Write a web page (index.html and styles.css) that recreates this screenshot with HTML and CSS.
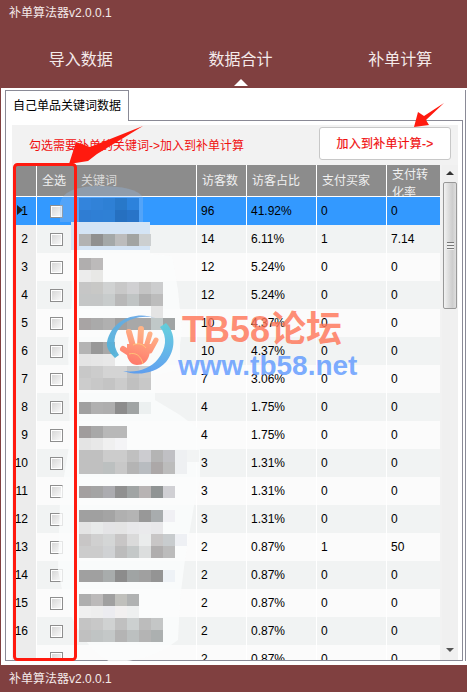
FILE: index.html
```html
<!DOCTYPE html>
<html lang="zh">
<head>
<meta charset="utf-8">
<title>补单算法器v2.0.0.1</title>
<link rel="stylesheet" href="styles.css">
</head>
<body>
<div class="app">
  <header class="top">
    <div class="title">补单算法器v2.0.0.1</div>
    <nav class="nav">
      <div class="nav-item">导入数据</div>
      <div class="nav-item active">数据合计</div>
      <div class="nav-item">补单计算</div>
    </nav>
  </header>
  <main class="main">
    <div class="frame">
      <div class="tab">自己单品关键词数据</div>
      <div class="pane">
        <div class="panel">
          <div class="toolbar">
            <div class="hint">勾选需要补单的关键词-&gt;加入到补单计算</div>
            <div class="add-btn">加入到补单计算-&gt;</div>
          </div>
          <div class="body">
            <div class="grid">
              <div class="row head"><div class="c"></div><div class="c sel">全选</div><div class="c kw">关键词</div><div class="c">访客数</div><div class="c">访客占比</div><div class="c">支付买家</div><div class="c wrap">支付转化率</div></div>
              <div class="row current"><div class="c rn"><i class="ptr"></i>1</div><div class="c sel"><span class="cb"></span></div><div class="c"></div><div class="c">96</div><div class="c">41.92%</div><div class="c">0</div><div class="c">0</div></div>
              <div class="row alt"><div class="c rn">2</div><div class="c sel"><span class="cb"></span></div><div class="c"></div><div class="c">14</div><div class="c">6.11%</div><div class="c">1</div><div class="c">7.14</div></div>
              <div class="row"><div class="c rn">3</div><div class="c sel"><span class="cb"></span></div><div class="c"></div><div class="c">12</div><div class="c">5.24%</div><div class="c">0</div><div class="c">0</div></div>
              <div class="row alt"><div class="c rn">4</div><div class="c sel"><span class="cb"></span></div><div class="c"></div><div class="c">12</div><div class="c">5.24%</div><div class="c">0</div><div class="c">0</div></div>
              <div class="row"><div class="c rn">5</div><div class="c sel"><span class="cb"></span></div><div class="c"></div><div class="c">10</div><div class="c">4.37%</div><div class="c">0</div><div class="c">0</div></div>
              <div class="row alt"><div class="c rn">6</div><div class="c sel"><span class="cb"></span></div><div class="c"></div><div class="c">10</div><div class="c">4.37%</div><div class="c">0</div><div class="c">0</div></div>
              <div class="row"><div class="c rn">7</div><div class="c sel"><span class="cb"></span></div><div class="c"></div><div class="c">7</div><div class="c">3.06%</div><div class="c">0</div><div class="c">0</div></div>
              <div class="row alt"><div class="c rn">8</div><div class="c sel"><span class="cb"></span></div><div class="c"></div><div class="c">4</div><div class="c">1.75%</div><div class="c">0</div><div class="c">0</div></div>
              <div class="row"><div class="c rn">9</div><div class="c sel"><span class="cb"></span></div><div class="c"></div><div class="c">4</div><div class="c">1.75%</div><div class="c">0</div><div class="c">0</div></div>
              <div class="row alt"><div class="c rn">10</div><div class="c sel"><span class="cb"></span></div><div class="c"></div><div class="c">3</div><div class="c">1.31%</div><div class="c">0</div><div class="c">0</div></div>
              <div class="row"><div class="c rn">11</div><div class="c sel"><span class="cb"></span></div><div class="c"></div><div class="c">3</div><div class="c">1.31%</div><div class="c">0</div><div class="c">0</div></div>
              <div class="row alt"><div class="c rn">12</div><div class="c sel"><span class="cb"></span></div><div class="c"></div><div class="c">3</div><div class="c">1.31%</div><div class="c">0</div><div class="c">0</div></div>
              <div class="row"><div class="c rn">13</div><div class="c sel"><span class="cb"></span></div><div class="c"></div><div class="c">2</div><div class="c">0.87%</div><div class="c">1</div><div class="c">50</div></div>
              <div class="row alt"><div class="c rn">14</div><div class="c sel"><span class="cb"></span></div><div class="c"></div><div class="c">2</div><div class="c">0.87%</div><div class="c">0</div><div class="c">0</div></div>
              <div class="row"><div class="c rn">15</div><div class="c sel"><span class="cb"></span></div><div class="c"></div><div class="c">2</div><div class="c">0.87%</div><div class="c">0</div><div class="c">0</div></div>
              <div class="row alt"><div class="c rn">16</div><div class="c sel"><span class="cb"></span></div><div class="c"></div><div class="c">2</div><div class="c">0.87%</div><div class="c">0</div><div class="c">0</div></div>
              <div class="row"><div class="c rn"></div><div class="c sel"><span class="cb"></span></div><div class="c"></div><div class="c">2</div><div class="c">0.87%</div><div class="c">0</div><div class="c">0</div></div>
            </div>
            <div class="scrollbar">
              <i class="arrow up"></i>
              <div class="thumb"><i class="grip"></i></div>
              <i class="arrow down"></i>
            </div>
          </div>
        </div>
      </div>
    </div>
  </main>
  <footer class="foot">补单算法器v2.0.0.1</footer>
</div>

<svg class="overlay" width="467" height="692" viewBox="0 0 467 692" aria-hidden="true">
  <defs>
    <linearGradient id="ringR" x1="0" y1="0" x2="0" y2="1"><stop offset="0" stop-color="#5fd0dc"/><stop offset="1" stop-color="#5a9cf0"/></linearGradient>
    <linearGradient id="ringL" x1="0" y1="1" x2="1" y2="0"><stop offset="0" stop-color="#4fb4d8"/><stop offset="1" stop-color="#70a8ea"/></linearGradient>
    <linearGradient id="hand" gradientUnits="userSpaceOnUse" x1="140" y1="328" x2="128" y2="366"><stop offset="0" stop-color="#ffb488"/><stop offset="1" stop-color="#ff7468"/></linearGradient>
  </defs>

  <path class="smear-top" d="M60 203Q64 186 100 186Q135 186 143 197V222H60Z"/>
  <path class="smear-band" d="M71 222H150V250H71Z"/>

  <g class="mosaic">
    <rect x="79" y="198" fill="#3384dc"/><rect x="91" y="198" fill="#3182d8"/><rect x="103" y="198" fill="#2e80d5"/><rect x="115" y="198" fill="#2878c9"/><rect x="127" y="198" fill="#2c82dc"/>
    <rect x="79" y="210" fill="#2f7dd3"/><rect x="91" y="210" fill="#2f7fd5"/><rect x="103" y="210" fill="#2f80d5"/><rect x="115" y="210" fill="#2670c0"/><rect x="127" y="210" fill="#2874c8"/>
  </g>

  <path class="smear" d="M71 250H150V254L172 256L178 290L182 330L180 345L180 370L155 375L155 400L180 415L200 430L200 480L195 500L185 560L180 600L178 640Q150 662 110 662Q70 640 58 570L60 500L70 440L68 345L72 300Z"/>

  <g class="mosaic">
    <rect x="79" y="234" fill="#b2b2b2"/><rect x="91" y="234" fill="#909090"/><rect x="103" y="234" fill="#a4a8a8"/><rect x="115" y="234" fill="#bcbcbc"/><rect x="127" y="234" fill="#a2a4a2"/><rect x="139" y="234" fill="#cccfd0"/>
    <rect x="79" y="258" fill="#b0aeae"/><rect x="91" y="258" fill="#bcbaba"/>
    <rect x="79" y="270" fill="#ececec"/><rect x="91" y="270" fill="#e8e8e6"/>
    <rect x="79" y="282" fill="#c6c6c6"/><rect x="91" y="282" fill="#c8c8c6"/><rect x="103" y="282" fill="#d0d2d2"/><rect x="115" y="282" fill="#c8c8c8"/><rect x="127" y="282" fill="#d0d0d2"/><rect x="139" y="282" fill="#c4c4c4"/><rect x="151" y="282" fill="#cccdce"/>
    <rect x="79" y="294" fill="#c4c6c6"/><rect x="91" y="294" fill="#c4c6c6"/><rect x="103" y="294" fill="#c8cccc"/><rect x="115" y="294" fill="#b8b8b8"/><rect x="127" y="294" fill="#c0c4c4"/><rect x="139" y="294" fill="#b0b0b0"/><rect x="151" y="294" fill="#bcbcbc"/>
    <rect x="151" y="306" fill="#e4e4e4"/>
    <rect x="79" y="318" fill="#a8a4a4"/><rect x="91" y="318" fill="#aaaaaa"/><rect x="103" y="318" fill="#b0b0b0"/><rect x="115" y="318" fill="#a0a0a0"/><rect x="127" y="318" fill="#a8a8a8"/><rect x="139" y="318" fill="#a8a8a8"/><rect x="151" y="318" fill="#c0c8c8"/><rect x="163" y="318" fill="#a0a4a4"/>
    <rect x="79" y="342" fill="#b4b4b4"/><rect x="91" y="342" fill="#989898"/><rect x="103" y="342" fill="#a8a8a8"/>
    <rect x="79" y="354" fill="#e4e4e4"/><rect x="91" y="354" fill="#e6e6e6"/><rect x="103" y="354" fill="#e8e8e8"/>
    <rect x="79" y="366" fill="#c8c8c8"/><rect x="91" y="366" fill="#cccccc"/><rect x="103" y="366" fill="#d4d4d4"/><rect x="115" y="366" fill="#d4d4d4"/><rect x="127" y="366" fill="#c4c4c4"/><rect x="139" y="366" fill="#cccccc"/>
    <rect x="79" y="378" fill="#cccccc"/><rect x="91" y="378" fill="#c8c8c8"/><rect x="103" y="378" fill="#c4c4c4"/><rect x="115" y="378" fill="#cccccc"/><rect x="127" y="378" fill="#c0c0c0"/><rect x="139" y="378" fill="#c8c8c8"/>
    <rect x="79" y="402" fill="#a0a0a0"/><rect x="91" y="402" fill="#b0b0b0"/><rect x="103" y="402" fill="#aeaeae"/><rect x="115" y="402" fill="#8c8c8c"/><rect x="127" y="402" fill="#a0a4a4"/><rect x="139" y="402" fill="#ecf0f0"/>
    <rect x="79" y="426" fill="#a09c9c"/><rect x="91" y="426" fill="#a8a8a8"/><rect x="103" y="426" fill="#b8b8b8"/><rect x="115" y="426" fill="#b8b8b8"/>
    <rect x="79" y="438" fill="#e4e4e4"/><rect x="91" y="438" fill="#e8e8e8"/><rect x="103" y="438" fill="#f0f0f0"/><rect x="115" y="438" fill="#f4f4f6"/>
    <rect x="79" y="450" fill="#c0c0c0"/><rect x="91" y="450" fill="#c0c0c0"/><rect x="103" y="450" fill="#cccccc"/><rect x="115" y="450" fill="#cccccc"/><rect x="127" y="450" fill="#c0c0c0"/><rect x="139" y="450" fill="#ccccd0"/><rect x="151" y="450" fill="#b4b4b4"/><rect x="163" y="450" fill="#c0c0c4"/><rect x="175" y="450" fill="#eef0f2"/><rect x="187" y="450" fill="#f2f4f4"/>
    <rect x="79" y="462" fill="#c0c0c0"/><rect x="91" y="462" fill="#c0c0c0"/><rect x="103" y="462" fill="#bcc0c0"/><rect x="115" y="462" fill="#c8c8c8"/><rect x="127" y="462" fill="#b4b4b4"/><rect x="139" y="462" fill="#b8bcc0"/><rect x="151" y="462" fill="#aca8a8"/><rect x="163" y="462" fill="#bcbcbc"/><rect x="175" y="462" fill="#eef0f2"/>
    <rect x="79" y="486" fill="#a4a0a0"/><rect x="91" y="486" fill="#a4a4a4"/><rect x="103" y="486" fill="#acacb0"/><rect x="115" y="486" fill="#909090"/><rect x="127" y="486" fill="#a0a4a4"/><rect x="139" y="486" fill="#b8b4b4"/><rect x="151" y="486" fill="#909494"/><rect x="163" y="486" fill="#d0d0d4"/>
    <rect x="79" y="510" fill="#a0a0a0"/><rect x="91" y="510" fill="#a0a0a0"/><rect x="103" y="510" fill="#a4a4a4"/><rect x="115" y="510" fill="#b0b0b0"/><rect x="127" y="510" fill="#b4b4b4"/><rect x="139" y="510" fill="#989898"/><rect x="151" y="510" fill="#a8acae"/><rect x="163" y="510" fill="#f0f0f4"/>
    <rect x="79" y="522" fill="#e4e4e4"/><rect x="91" y="522" fill="#e8eaea"/><rect x="103" y="522" fill="#e4e4e6"/><rect x="115" y="522" fill="#e4e4e4"/><rect x="127" y="522" fill="#e8e8ea"/><rect x="139" y="522" fill="#eaeaec"/><rect x="151" y="522" fill="#e8e8ea"/>
    <rect x="79" y="534" fill="#c8c6c6"/><rect x="91" y="534" fill="#d0d0d0"/><rect x="103" y="534" fill="#d4d6d6"/><rect x="115" y="534" fill="#c8c6c6"/><rect x="127" y="534" fill="#dadada"/><rect x="139" y="534" fill="#eaecec"/><rect x="151" y="534" fill="#c8c6c6"/><rect x="163" y="534" fill="#c8ccce"/><rect x="175" y="534" fill="#eef0f4"/>
    <rect x="79" y="546" fill="#cccccc"/><rect x="91" y="546" fill="#cccccc"/><rect x="103" y="546" fill="#d0d2d4"/><rect x="115" y="546" fill="#bcbcbc"/><rect x="127" y="546" fill="#c4c8c8"/><rect x="139" y="546" fill="#dcdede"/><rect x="151" y="546" fill="#b0aeae"/><rect x="163" y="546" fill="#bcbcbc"/>
    <rect x="79" y="570" fill="#a0a0a0"/><rect x="91" y="570" fill="#a0a0a0"/><rect x="103" y="570" fill="#a8acac"/><rect x="115" y="570" fill="#8c8c8c"/><rect x="127" y="570" fill="#a0a4a4"/><rect x="139" y="570" fill="#a0a0a0"/><rect x="151" y="570" fill="#949494"/><rect x="163" y="570" fill="#eef2f6"/>
    <rect x="79" y="594" fill="#aeaeae"/><rect x="91" y="594" fill="#bcbaba"/><rect x="103" y="594" fill="#a0a0a0"/><rect x="115" y="594" fill="#c0c0bc"/><rect x="127" y="594" fill="#b0b2b2"/>
    <rect x="79" y="606" fill="#f0f0f0"/><rect x="91" y="606" fill="#eeeeee"/><rect x="103" y="606" fill="#ececf0"/><rect x="115" y="606" fill="#f2f0f0"/><rect x="127" y="606" fill="#eef0f0"/>
    <rect x="79" y="618" fill="#c4c4c4"/><rect x="91" y="618" fill="#c8c8c8"/><rect x="103" y="618" fill="#d0d2d2"/><rect x="115" y="618" fill="#c0c0c0"/><rect x="127" y="618" fill="#ccd0d0"/><rect x="139" y="618" fill="#bcbcbc"/><rect x="151" y="618" fill="#c4c6c6"/>
    <rect x="79" y="630" fill="#c0c0c0"/><rect x="91" y="630" fill="#c0c4c4"/><rect x="103" y="630" fill="#c4c8c8"/><rect x="115" y="630" fill="#b4b4b4"/><rect x="127" y="630" fill="#bcc0c0"/><rect x="139" y="630" fill="#b4b4b4"/><rect x="151" y="630" fill="#acb0b0"/>
  </g>

  <path class="ring" fill="url(#ringL)" d="M155 318C138 311 112 318 107 342C106 348 110 353 115 358L119 355C112 345 113 334 122 325C130 318 144 315 155 318Z"/>
  <path class="ring" fill="url(#ringR)" d="M160 327L166 323C176 333 176 350 166 362C155 374 137 376 123 371C137 373 150 369 158 359C166 349 168 337 160 327Z"/>
  <g class="hand-fingers">
    <path d="M133 346L129 332"/><path d="M140 346L141 329"/><path class="thin" d="M146 347L150 334"/><path class="thin" d="M150 351L156 340"/><path d="M137 358L123 349"/>
  </g>
  <path class="palm" d="M127 344H152L149 356C147 362 143 365 137 365C132 365 128 361 127 355Z"/>
  <path class="palm-line" d="M133 345C137 343 142 343 146 348M129 354C136 352 141 356 143 364"/>

  <rect class="redbox" x="14.5" y="164.5" width="61" height="495" rx="3"/>
  <polygon class="red" points="143,126 90,147 76,142 69,164 88,161 97,154"/>
  <polygon class="red" points="444,103 424,116 418,112 414,127 429,125 426,120"/>
</svg>
<div class="wm wm-cn">TB58论坛</div>
<div class="wm wm-url">www.tb58.net</div>
</body>
</html>
```

FILE: styles.css
```css
* { box-sizing: border-box; }
html, body { margin: 0; padding: 0; }
body {
  width: 467px;
  height: 692px;
  position: relative;
  overflow: hidden;
  font-family: "Liberation Sans", "Noto Sans CJK SC", sans-serif;
  font-size: 12px;
  color: #000;
  background: #fff;
}
.app { display: flex; flex-direction: column; height: 692px; }

.top { height: 88px; background: #804040; color: #f4eaea; flex: none; overflow: hidden; }
.title { height: 25px; padding: 6px 0 0 9px; line-height: 14px; }
.nav { display: flex; width: 480px; padding-left: 1px; }
.nav-item {
  width: 160px;
  height: 63px;
  padding-top: 24px;
  font-size: 16px;
  line-height: 22px;
  text-align: center;
  display: flex;
  flex-direction: column;
  align-items: center;
}
.nav-item.active::after {
  content: "";
  margin-top: 8px;
  border-left: 7px solid transparent;
  border-right: 7px solid transparent;
  border-bottom: 7px solid #fff;
}

.main { flex: 1; min-height: 0; background: #fff; border-left: 1px solid #804040; padding: 2px 0 4px 4px; }
.frame { height: 100%; width: 461px; border-right: 1px solid #8a8a96; padding-right: 2px; display: flex; flex-direction: column; }
.tab {
  width: 124px;
  height: 31px;
  margin-bottom: -1px;
  position: relative;
  background: #fff;
  border: 1px solid #8a8a96;
  border-bottom: 0;
  padding: 7px 0 0 7px;
  line-height: 16px;
}
.pane { flex: 1; min-height: 0; border: 1px solid #8a8a96; padding: 4px 4px 0 6px; }
.panel { height: 100%; background: #f2f2f2; display: flex; flex-direction: column; }

.toolbar { height: 40px; flex: none; display: flex; justify-content: space-between; padding: 2px 7px 0 17px; }
.hint { color: #f01010; line-height: 16px; padding-top: 11px; }
.add-btn {
  width: 132px;
  height: 33px;
  background: #fff;
  border: 1px solid #c8c8c8;
  border-radius: 3px;
  color: #f01010;
  text-align: center;
  line-height: 32px;
  letter-spacing: 0.2px;
  -webkit-text-stroke: 0.2px #f01010;
}

.body { flex: 1; min-height: 0; display: flex; padding-left: 2px; }
.grid { width: 426px; height: 100%; overflow: hidden; background: #fff; flex: none; }
.row {
  display: grid;
  grid-template-columns: 22px 38px 120px 49px 69px 69px 53px;
  column-gap: 1px;
  height: 28px;
  padding-bottom: 1px;
  background: #fff;
}
.c { background: #fbfbfb; padding: 1px 0 0 4px; line-height: 27px; overflow: hidden; white-space: nowrap; }
.alt .c { background: #f1f3f3; }
.c.sel { display: flex; align-items: center; justify-content: center; padding: 0; }
.c.rn, .alt .c.rn { background: #ececec; text-align: right; padding: 1px 8px 0 0; position: relative; overflow: visible; }

.head { height: 32px; }
.head .c { background: #8c8c8c; color: #f0f0f0; line-height: 32px; padding: 0 0 0 5px; }
.head .c.sel { padding: 0 0 0 5px; justify-content: flex-start; }
.head .kw { color: #d9d9d9; }
.head .wrap { white-space: normal; line-height: 18px; padding: 1px 4px 0 5px; }

.current .c, .current .c.rn { background: #3399ff; color: #000; }
.ptr {
  position: absolute;
  left: 3px;
  top: 8px;
  border-left: 6px solid #222;
  border-top: 5px solid transparent;
  border-bottom: 5px solid transparent;
}
.cb {
  width: 13px;
  height: 13px;
  border: 1px solid #8e8e8e;
  background: linear-gradient(135deg, #d4d4d4, #fbfbfb);
  box-shadow: inset 0 0 0 1px #fff;
}

.scrollbar { width: 16px; margin-left: 2px; background: #f0f0f0; display: flex; flex-direction: column; align-items: center; }
.arrow { flex: none; width: 0; height: 0; border-left: 4px solid transparent; border-right: 4px solid transparent; }
.arrow.up { margin-top: 6px; border-bottom: 4px solid #333; }
.arrow.down { margin-top: auto; margin-bottom: 8px; border-top: 4px solid #555; }
.thumb {
  width: 14px;
  height: 127px;
  margin-top: 7px;
  border: 1px solid #989898;
  border-radius: 2px;
  background: linear-gradient(90deg, #f2f2f2, #dcdcdc 40%, #cdcdcd 70%, #dedede);
  display: flex;
  align-items: center;
  justify-content: center;
}
.grip { width: 7px; height: 8px; background: repeating-linear-gradient(180deg, #777 0 1px, #eee 1px 3px); }

.foot { height: 27px; flex: none; background: #804040; color: #f4eaea; padding: 6px 0 0 9px; line-height: 16px; }

.overlay { position: absolute; left: 0; top: 0; pointer-events: none; }
.mosaic rect { width: 12px; height: 12px; shape-rendering: crispEdges; }
.smear { fill: rgba(251, 252, 252, 0.8); }
.smear-top { fill: rgba(150, 190, 235, 0.32); }
.smear-band { fill: #d4e4f5; }
.redbox { fill: none; stroke: #ff1a0f; stroke-width: 3; }
.red { fill: #ff1a0f; }
.ring { opacity: 0.95; }
.hand-fingers path { fill: none; stroke: url(#hand); stroke-width: 6; stroke-linecap: round; }
.hand-fingers path.thin { stroke-width: 5; }
.palm { fill: url(#hand); }
.palm-line { fill: none; stroke: #ffcf78; stroke-width: 0.8; }

.wm { position: absolute; font-weight: 700; white-space: nowrap; line-height: 1; }
.wm-cn { left: 182px; top: 312px; font-size: 36px; color: rgba(255, 118, 88, 0.82); }
.wm-url { left: 178px; top: 352px; font-size: 28px; color: rgba(90, 150, 255, 0.8); }
```
